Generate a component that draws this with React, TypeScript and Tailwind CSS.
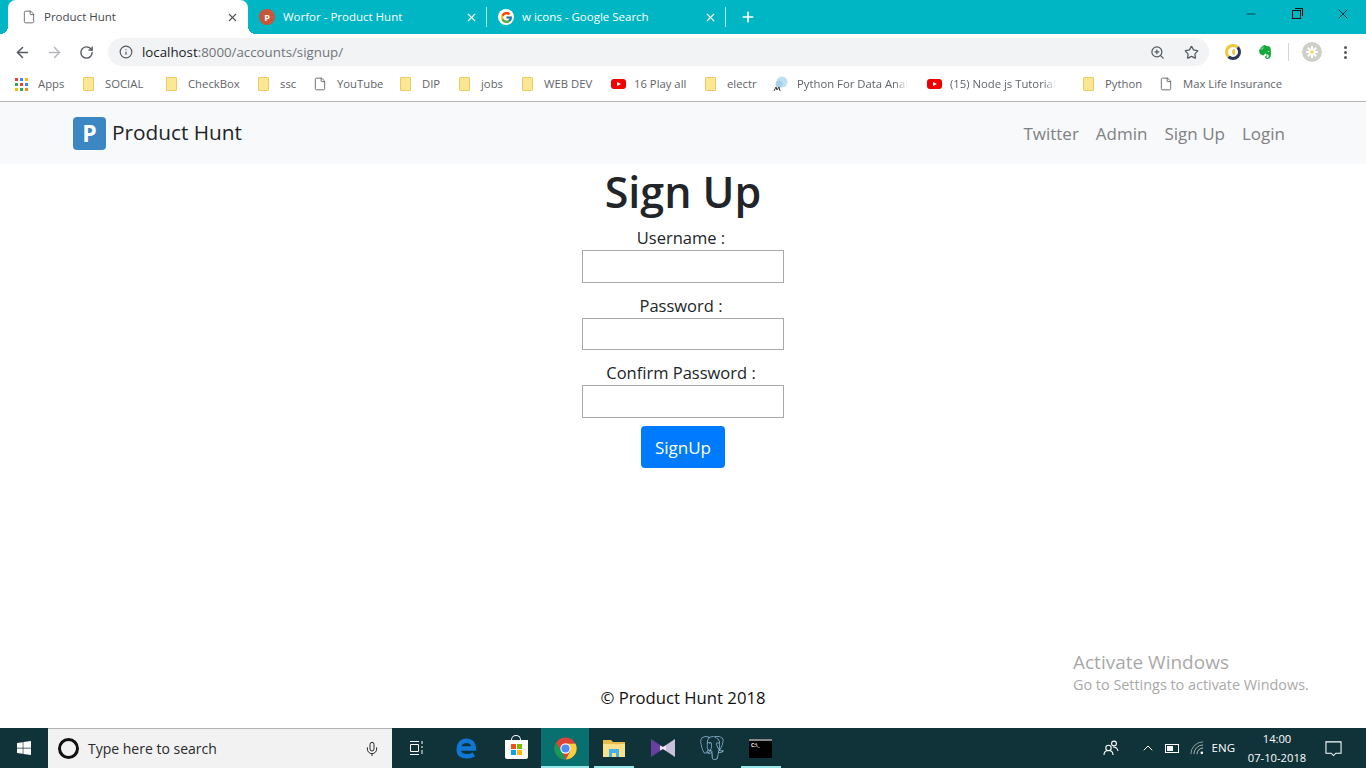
import { ArrowLeft, ArrowRight, Info, Minus, Plus, RotateCw, Star, X, ZoomIn, Mic, ChevronUp, File } from "lucide-react";
import { FaEvernote, FaWindows } from "react-icons/fa";
import { FcGoogle } from "react-icons/fc";
import { SiPostgresql } from "react-icons/si";

type Mark = "apps" | "folder" | "page" | "youtube" | "brain";

const bookmarks: { label: string; mark: Mark; width: string; fade?: boolean }[] = [
  { label: "Apps", mark: "apps", width: "w-[68px]" },
  { label: "SOCIAL", mark: "folder", width: "w-[83px]" },
  { label: "CheckBox", mark: "folder", width: "w-[92px]" },
  { label: "ssc", mark: "folder", width: "w-[57px]" },
  { label: "YouTube", mark: "page", width: "w-[85px]" },
  { label: "DIP", mark: "folder", width: "w-[59px]" },
  { label: "jobs", mark: "folder", width: "w-[63px]" },
  { label: "WEB DEV", mark: "folder", width: "w-[89px]" },
  { label: "16 Play all", mark: "youtube", width: "w-[94px]" },
  { label: "electr", mark: "folder", width: "w-[68px]" },
  { label: "Python For Data Anal", mark: "brain", width: "w-[154px]", fade: true },
  { label: "(15) Node js Tutorial", mark: "youtube", width: "w-[156px]", fade: true },
  { label: "Python", mark: "folder", width: "w-[78px]" },
  { label: "Max Life Insurance", mark: "page", width: "w-[130px]" },
];

function ChromeMark() {
  return (
    <svg viewBox="0 0 24 24" className="h-[23px] w-[23px]">
      <circle cx="12" cy="12" r="11.500" fill="#DB4437" />
      <path fill="#0F9D58" d="M2 6.300 7.800 14.500 12.800 23.400 a11.500 11.500 0 0 1-10.800-17.100z" />
      <path fill="#FFCD40" d="M12 7h10.500A11.500 11.500 0 0 1 12.500 23.500L17 14.500z" />
      <circle cx="12" cy="12" r="5.400" fill="#fff" />
      <circle cx="12" cy="12" r="4.300" fill="#4E8DF5" />
    </svg>
  );
}

function BookmarkMark({ mark }: { mark: Mark }) {
  if (mark === "apps") {
    const dots = ["bg-[#ea4335]", "bg-[#4285f4]", "bg-[#fbbc05]", "bg-[#34a853]", "bg-[#ea4335]", "bg-[#4285f4]", "bg-[#fbbc05]", "bg-[#34a853]", "bg-[#f28b1e]"];
    return (
      <span className="grid h-[13px] w-[13px] grid-cols-3 gap-[2px]">
        {dots.map((dot, i) => (
          <span key={i} className={`h-[3px] w-[3px] ${dot}`} />
        ))}
      </span>
    );
  }
  if (mark === "folder") {
    return <span className="block h-[14px] w-[11px] rounded-[1px] border border-[#eecb62] bg-[#fde694]" />;
  }
  if (mark === "page") {
    return <File size={14} strokeWidth={1.4} className="-ml-[2px] text-[#555]" />;
  }
  if (mark === "youtube") {
    return (
      <span className="flex h-[10px] w-[15px] items-center justify-center rounded-[3px] bg-[#f00000]">
        <span className="h-0 w-0 border-y-[2.500px] border-l-[4px] border-y-transparent border-l-white" />
      </span>
    );
  }
  return (
    <svg viewBox="0 0 16 16" className="h-4 w-4">
      <circle cx="9" cy="6" r="5.500" fill="#bfe0f2" />
      <circle cx="6" cy="8" r="3.500" fill="#a6d0e8" />
      <path d="M1 15l2-4 1 3 2-3 1 4" fill="none" stroke="#333" strokeWidth="1" />
    </svg>
  );
}

function Tab({ title, icon, active }: { title: string; icon: React.ReactNode; active?: boolean }) {
  return (
    <div
      className={
        active
          ? "relative flex h-[34px] w-[240px] items-center rounded-t-[8px] bg-white pl-[14px] pr-[9px] text-[#45494d] before:absolute before:-left-[8px] before:bottom-0 before:h-[8px] before:w-[8px] before:bg-[radial-gradient(circle_at_0_0,transparent_8px,white_8px)] after:absolute after:-right-[8px] after:bottom-0 after:h-[8px] after:w-[8px] after:bg-[radial-gradient(circle_at_100%_0,transparent_8px,white_8px)]"
          : "flex h-[34px] w-[239px] items-center pl-[11px] text-white"
      }
    >
      <span className={active ? "flex w-[22px] shrink-0 items-center" : "flex w-[24px] shrink-0 items-center"}>{icon}</span>
      <span className="flex-1 whitespace-nowrap text-[11.500px] leading-[16px]">{title}</span>
      <X size={13} strokeWidth={2} className={active ? "text-[#555]" : "text-white"} />
      {!active && <span className="ml-[8px] h-[20px] w-px bg-white/70" />}
    </div>
  );
}

function Tile({ width, active, running, children }: { width: string; active?: boolean; running?: boolean; children: React.ReactNode }) {
  return (
    <div className={`relative flex h-full items-center justify-center ${width} ${active ? "bg-[#08706f]" : ""}`}>
      {children}
      {running && <span className={`absolute bottom-0 h-[2px] bg-[#99e6e8] ${active ? "left-0 right-0" : "left-[5px] right-[4px]"}`} />}
    </div>
  );
}

function Field({ label, boxHeight }: { label: string; boxHeight: string }) {
  return (
    <>
      <label className="pr-[4px] text-[16.500px] leading-[24px] text-[#212529]">{label}</label>
      <input type="text" className={`w-[202px] border border-[#a9a9a9] bg-white ${boxHeight}`} />
    </>
  );
}

export default function App() {
  return (
    <div className="relative flex h-[768px] w-[1366px] flex-col overflow-hidden bg-white font-['Open_Sans','Noto_Sans',sans-serif]">
      {/* tab strip */}
      <div className="flex h-[34px] shrink-0 items-center bg-[#00b6c4] pl-[8px]">
        <Tab active title="Product Hunt" icon={<File size={14} strokeWidth={1.4} className="text-[#555]" />} />
        <Tab
          title="Worfor - Product Hunt"
          icon={<span className="flex h-4 w-4 items-center justify-center rounded-full bg-[#c9553a] text-[9px] font-bold leading-none text-white">P</span>}
        />
        <Tab
          title="w icons - Google Search"
          icon={<span className="flex h-4 w-4 items-center justify-center rounded-full bg-white"><FcGoogle size={13} /></span>}
        />
        <Plus size={16} strokeWidth={2.500} className="ml-[14px] text-white" />
        <div className="ml-auto flex h-[28px] items-center self-start">
          <span className="flex w-[46px] justify-center"><Minus size={14} strokeWidth={1.200} className="text-[#111]" /></span>
          <span className="flex w-[46px] justify-center">
            <span className="relative -ml-px block h-[9px] w-[9px] border border-[#111] before:absolute before:-right-[3px] before:-top-[3px] before:h-[8px] before:w-[8px] before:border-r before:border-t before:border-[#111]" />
          </span>
          <span className="flex w-[46px] justify-center"><X size={16} strokeWidth={1.200} className="text-[#111]" /></span>
        </div>
      </div>

      {/* toolbar */}
      <div className="flex h-[32px] shrink-0 items-end bg-white pl-[14px]">
        <div className="flex h-[28px] items-center">
          <ArrowLeft size={17} strokeWidth={2.200} className="text-[#555a60]" />
          <ArrowRight size={17} strokeWidth={2.200} className="ml-[15px] text-[#b5b7ba]" />
          <RotateCw size={15} strokeWidth={2.200} className="ml-[16px] text-[#555a60]" />
        </div>
        <div className="ml-[14px] flex h-[28px] w-[1101px] items-center rounded-full bg-[#f1f3f4] pl-[11px] pr-[10px]">
          <Info size={14} strokeWidth={2} className="text-[#555a60]" />
          <span className="ml-[9px] text-[13.300px] leading-[18px] text-[#202124]">
            localhost<span className="text-[#70757a]">:8000/accounts/signup/</span>
          </span>
          <ZoomIn size={15} strokeWidth={2} className="ml-auto text-[#555a60]" />
          <Star size={15} strokeWidth={2} className="ml-[19px] text-[#555a60]" />
        </div>
        <div className="flex h-[28px] items-center">
          <span className="ml-[16px] flex h-4 w-4 items-center justify-center rounded-full border-[3px] border-[#f0c63e] border-r-[#2a3a5a] border-b-[#2a3a5a] bg-white">
            <span className="h-[6px] w-[3px] rounded-l-full bg-[#f0c63e]" />
          </span>
          <FaEvernote size={16} className="ml-[16px] text-[#14a83c]" />
          <span className="ml-[15px] h-[18px] w-px bg-[#d5d6d8]" />
          <span className="ml-[13px] flex h-5 w-5 items-center justify-center rounded-full bg-[#cfcfca]">
            <svg viewBox="0 0 12 12" className="h-3 w-3" stroke="#fff" strokeWidth="2.200" strokeLinecap="round">
              <path d="M6 1v10M1 6h10M2.500 2.500l7 7M9.500 2.500l-7 7" />
              <circle cx="6" cy="6" r="1.800" fill="#ecd860" stroke="none" />
            </svg>
          </span>
          <span className="ml-[22px] flex flex-col gap-[2px]">
            <span className="h-[3px] w-[3px] rounded-full bg-[#555a60]" />
            <span className="h-[3px] w-[3px] rounded-full bg-[#555a60]" />
            <span className="h-[3px] w-[3px] rounded-full bg-[#555a60]" />
          </span>
        </div>
      </div>

      {/* bookmarks bar */}
      <div className="flex h-[36px] shrink-0 items-center border-b border-[#b4b4b4] bg-white pl-[15px] pt-px">
        {bookmarks.map((item) => (
          <div key={item.label} className={`flex shrink-0 items-center ${item.width}`}>
            <span
              className={
                item.mark === "brain"
                  ? "flex w-[24px] shrink-0 items-center"
                  : item.mark === "apps" || item.mark === "youtube"
                    ? "flex w-[23px] shrink-0 items-center"
                    : "flex w-[22px] shrink-0 items-center"
              }
            >
              <BookmarkMark mark={item.mark} />
            </span>
            <span
              className={`whitespace-nowrap text-[11.300px] leading-[16px] text-[#5f6368] ${
                item.fade ? "[mask-image:linear-gradient(to_right,black_88%,transparent)]" : ""
              }`}
            >
              {item.label}
            </span>
          </div>
        ))}
      </div>

      {/* site navbar */}
      <nav className="flex h-[62px] shrink-0 items-center bg-[#f8f9fa] pl-[73px] pr-[81px]">
        <span className="flex h-[33px] w-[33px] items-center justify-center rounded-[4px] bg-[#3b87c4] text-[23px] font-bold leading-none text-white">P</span>
        <span className="ml-[6px] text-[20.800px] text-[#212529]">Product Hunt</span>
        <div className="ml-auto flex gap-[17px] pt-px text-[17px] text-[#808183]">
          <span>Twitter</span>
          <span>Admin</span>
          <span>Sign Up</span>
          <span>Login</span>
        </div>
      </nav>

      {/* sign up form */}
      <main className="flex flex-1 flex-col items-center">
        <h1 className="h-[62px] text-[43px] font-semibold leading-[56px] text-[#212529]">Sign Up</h1>
        <Field label="Username :" boxHeight="h-[33px]" />
        <div className="h-[11px]" />
        <Field label="Password :" boxHeight="h-[32px]" />
        <div className="h-[11px]" />
        <Field label="Confirm Password :" boxHeight="h-[33px]" />
        <button type="button" className="mt-[8px] h-[42px] w-[84px] rounded-[4px] bg-[#007bff] pt-px text-[17px] text-white">SignUp</button>
      </main>

      <footer className="h-[42px] shrink-0 text-center text-[16.700px] leading-[24px] text-[#111]">© Product Hunt 2018</footer>

      {/* taskbar */}
      <div className="flex h-[40px] shrink-0 items-center bg-[#0f3338] text-white">
        <div className="flex h-full w-[48px] items-center justify-center"><FaWindows size={16} /></div>
        <div className="flex h-full w-[344px] items-center border-t border-[#b4b4b4] bg-[#f2f2f2] pl-[10px] pr-[12px] text-[#2a2a2a]">
          <span className="h-[21px] w-[21px] rounded-full border-[3px] border-[#111]" />
          <span className="ml-[9px] text-[14px]">Type here to search</span>
          <Mic size={16} strokeWidth={1.500} className="ml-auto" />
        </div>
        <Tile width="w-[50px]">
          <svg viewBox="0 0 16 16" className="h-4 w-4" fill="none" stroke="#fff" strokeWidth="1">
            <path d="M1 1.500h9M1 14.500h9M1.500 4.500h8v7h-8zM13 1v3M13 6v2M13 10v4" />
          </svg>
        </Tile>
        <Tile width="w-[49px]">
          <svg viewBox="0 0 24 24" className="h-[22px] w-[22px]" fill="none" stroke="#0f78d4" strokeWidth="5">
            <path d="M4 12.500h15.500c0-5-3-8.500-8-8.500S3 8 3 13.500s4 7.500 9 7.500c3 0 5.500-.8 7.500-2" />
          </svg>
        </Tile>
        <Tile width="w-[50px]">
          <span className="relative mt-[3px] flex h-[19px] w-[23px] items-center justify-center rounded-b-[2px] bg-white before:absolute before:-top-[5px] before:left-[6px] before:h-[6px] before:w-[10px] before:rounded-t-full before:border before:border-b-0 before:border-white">
            <span className="grid grid-cols-2 gap-px">
              <span className="h-[5px] w-[5px] bg-[#f25022]" />
              <span className="h-[5px] w-[5px] bg-[#7fba00]" />
              <span className="h-[5px] w-[5px] bg-[#00a4ef]" />
              <span className="h-[5px] w-[5px] bg-[#ffb900]" />
            </span>
          </span>
        </Tile>
        <Tile width="w-[48px]" active running><ChromeMark /></Tile>
        <Tile width="w-[49px]" running>
          <svg viewBox="0 0 22 18" className="h-[18px] w-[22px]">
            <path fill="#e9bb4d" d="M0 1h8l2 2h12v15H0z" />
            <path fill="#fde08a" d="M0 5h22v13H0z" />
            <path fill="#3fb3ea" d="M6 10h10v8h-3v-4H9v4H6z" />
          </svg>
        </Tile>
        <Tile width="w-[49px]">
          <svg viewBox="0 0 24 22" className="h-[22px] w-6">
            <path fill="#68409f" d="M0 2l12 8v2L0 20z" />
            <path fill="#c9c0dc" d="M24 2L12 10v2l12 8z" />
            <path fill="#efe9f7" d="M9 8.500l3 1.500 3-1.500v5L12 12l-3 1.500z" />
          </svg>
        </Tile>
        <Tile width="w-[49px]"><SiPostgresql size={24} className="text-[#8fb8d8]" /></Tile>
        <Tile width="w-[49px]" running>
          <span className="flex h-[19px] w-[23px] items-start border-t-2 border-[#888] bg-black pl-[2px] pt-[2px] text-[5px] font-bold leading-none text-white">C:\_</span>
        </Tile>

        <div className="ml-auto flex h-full items-center">
          <svg viewBox="0 0 16 16" className="h-4 w-4" fill="none" stroke="#fff" strokeWidth="1.100">
            <circle cx="5.500" cy="8" r="2.700" />
            <path d="M1 15c0-3 2-4.500 4.500-4.500S10 12 10 15" />
            <circle cx="11" cy="3.500" r="2.400" />
            <path d="M10 7c3 0 4.500 1.500 5 4" />
          </svg>
          <ChevronUp size={16} strokeWidth={1.500} className="ml-[21px]" />
          <span className="relative ml-[9px] flex h-[9px] w-[14px] items-center border border-white pl-[1px]"><span className="h-[5px] w-[6px] bg-white" /></span>
          <svg viewBox="0 0 16 16" className="ml-[11px] h-[14px] w-[14px]" fill="none" stroke="#fff" strokeWidth="1">
            <path d="M1 15A14 14 0 0 1 15 1" opacity="0.600" />
            <path d="M4.500 15A10.500 10.500 0 0 1 15 4.500" opacity="0.700" />
            <path d="M8 15A7 7 0 0 1 15 8" opacity="0.800" />
            <circle cx="13.500" cy="13.500" r="1.500" fill="#fff" stroke="none" />
          </svg>
          <span className="ml-[8px] text-[11.500px]">ENG</span>
          <div className="ml-[11px] flex w-[62px] flex-col items-center text-[11.200px] leading-[19px]">
            <span>14:00</span>
            <span>07-10-2018</span>
          </div>
          <svg viewBox="0 0 18 18" className="ml-[17px] mr-[24px] h-[17px] w-[17px]" fill="none" stroke="#fff" strokeWidth="1.100">
            <path d="M1 2h16v12h-5.500L9 16.500 6.500 14H1z" />
          </svg>
        </div>
      </div>

      {/* windows activation watermark */}
      <div className="pointer-events-none absolute left-[1073px] top-[650px] text-[#a9a9a9]">
        <div className="text-[19px] leading-[24px]">Activate Windows</div>
        <div className="text-[14.400px] leading-[22px]">Go to Settings to activate Windows.</div>
      </div>
    </div>
  );
}
